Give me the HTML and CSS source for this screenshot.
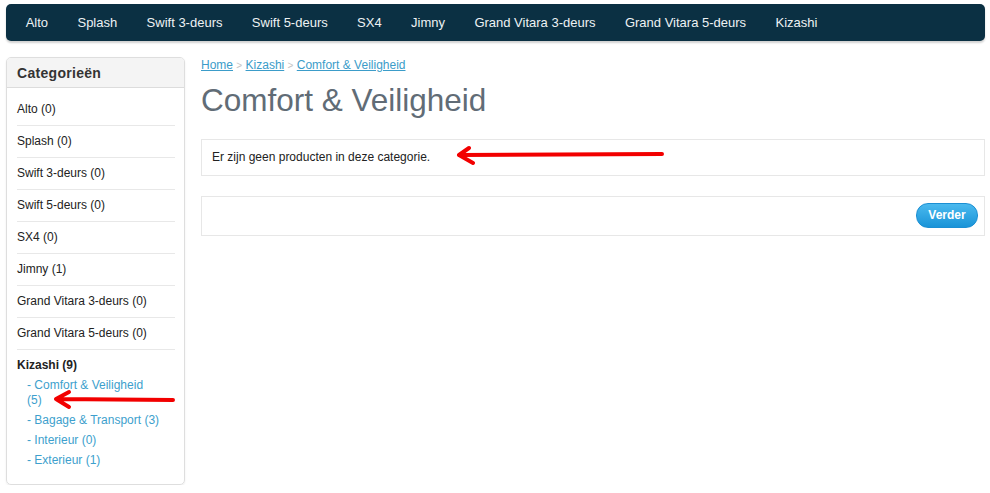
FILE: index.html
```html
<!DOCTYPE html>
<html lang="nl">
<head>
    <meta charset="UTF-8">
    <title>Comfort &amp; Veiligheid</title>
    <link rel="stylesheet" href="styles.css">
</head>
<body>
<div id="wrapper">
    <div id="menu">
        <ul>
            <li><a href="">Alto</a></li>
            <li><a href="">Splash</a></li>
            <li><a href="">Swift 3-deurs</a></li>
            <li><a href="">Swift 5-deurs</a></li>
            <li><a href="">SX4</a></li>
            <li><a href="">Jimny</a></li>
            <li><a href="">Grand Vitara 3-deurs</a></li>
            <li><a href="">Grand Vitara 5-deurs</a></li>
            <li><a href="">Kizashi</a></li>
        </ul>
    </div>
    <div id="page">
        <div class="side">
            <div class="side-head">Categorieën</div>
            <ul class="cats">
                <li><a href="">Alto (0)</a></li>
                <li><a href="">Splash (0)</a></li>
                <li><a href="">Swift 3-deurs (0)</a></li>
                <li><a href="">Swift 5-deurs (0)</a></li>
                <li><a href="">SX4 (0)</a></li>
                <li><a href="">Jimny (1)</a></li>
                <li><a href="">Grand Vitara 3-deurs (0)</a></li>
                <li><a href="">Grand Vitara 5-deurs (0)</a></li>
                <li class="open"><a href="">Kizashi (9)</a>
                    <ul class="sub">
                        <li><a href="">- Comfort &amp; Veiligheid (5)</a></li>
                        <li><a href="">- Bagage &amp; Transport (3)</a></li>
                        <li><a href="">- Interieur (0)</a></li>
                        <li><a href="">- Exterieur (1)</a></li>
                    </ul>
                </li>
            </ul>
        </div>
        <div class="main">
            <div class="crumbs">
                <a href="">Home</a> <span>&gt;</span> <a href="">Kizashi</a> <span>&gt;</span> <a href="">Comfort &amp; Veiligheid</a>
            </div>
            <h1>Comfort &amp; Veiligheid</h1>
            <div class="box">Er zijn geen producten in deze categorie.</div>
            <div class="box buttons">
                <a class="btn" href="">Verder</a>
            </div>
        </div>
    </div>
</div>
<!-- rode pijlen uit de screenshot -->
<svg class="marks" width="990" height="493" viewBox="0 0 990 493">
    <g stroke="#f20000" stroke-width="4" stroke-linecap="round" fill="none">
        <path d="M662 154 L460 155 M459 155 L469 148 M459 155 L473 163"/>
        <path d="M173 400 L57 399 M56 399 L69 392 M56 399 L69 407"/>
    </g>
</svg>
</body>
</html>
```

FILE: styles.css
```css
body{
    margin: 0px;
    padding: 0px;
    font-family: "Liberation Sans", Arial, sans-serif;
    font-size: 12px;
    color: #222;
    background: #fff;
    position: relative;
}
ul{
    margin: 0px;
    padding: 0px;
    list-style: none;
}
a{
    text-decoration: none;
}

#wrapper{
    padding: 4px 5px 0px 6px;
}
#menu{
    height: 37px;
    background: #0b3043;
    border-radius: 5px;
    box-shadow: 0px 2px 2px rgba(0,0,0,0.18);
}
#menu ul{
    display: flex;
    padding-left: 5px;
}
#menu ul li a{
    display: block;
    padding: 0px 14.7px;
    line-height: 37px;
    font-size: 13px;
    color: #eef2f4;
}

#page{
    display: flex;
    align-items: flex-start;
    gap: 16px;
    margin-top: 16px;
}
.side{
    width: 177px;
    border: 1px solid #dedede;
    border-radius: 5px;
    box-shadow: 0px 1px 2px rgba(0,0,0,0.08);
    overflow: hidden;
}
.side-head{
    line-height: 29px;
    padding: 1px 10px 0px 10px;
    height: 28px;
    background: #f4f4f4;
    border-bottom: 1px solid #dcdcdc;
    font-size: 14px;
    font-weight: bold;
    letter-spacing: 0.3px;
    color: #333;
}
.cats{
    padding: 6px 9px 8px 10px;
}
.cats > li{
    padding: 8px 0px;
    line-height: 15px;
    border-bottom: 1px solid #e8e8e8;
}
.cats > li > a{
    color: #222;
}
.cats > li.open{
    border-bottom: none;
}
.cats > li.open > a{
    font-weight: bold;
}
.sub{
    padding-left: 10px;
    width: 134px;
}
.sub li{
    padding-top: 5px;
    line-height: 15px;
}
.sub li a{
    color: #3d9fcd;
}

.main{
    flex: 1;
}
.crumbs{
    margin-top: 1px;
    line-height: 14px;
    color: #bbb;
}
.crumbs a{
    color: #3b9cc9;
    text-decoration: underline;
}
.crumbs span{
    font-size: 10px;
    color: #c4c4c4;
}
h1{
    margin: 9px 0px 21px 0px;
    font-size: 31.5px;
    line-height: 36px;
    font-weight: normal;
    color: #616c76;
}
.box{
    border: 1px solid #e7e7e7;
    padding: 10px 10px;
    line-height: 15px;
    color: #222;
}
.buttons{
    margin-top: 20px;
    padding: 6px 6px 7px 6px;
    display: flex;
    justify-content: flex-end;
}
.btn{
    display: block;
    width: 60px;
    height: 23px;
    line-height: 23px;
    text-align: center;
    border: 1px solid #1b8fd3;
    border-radius: 12px;
    background: linear-gradient(#4ab9ee, #1a94d8);
    color: #fff;
    font-weight: bold;
    font-size: 12px;
}

.marks{
    position: absolute;
    left: 0px;
    top: 0px;
    pointer-events: none;
}
```
